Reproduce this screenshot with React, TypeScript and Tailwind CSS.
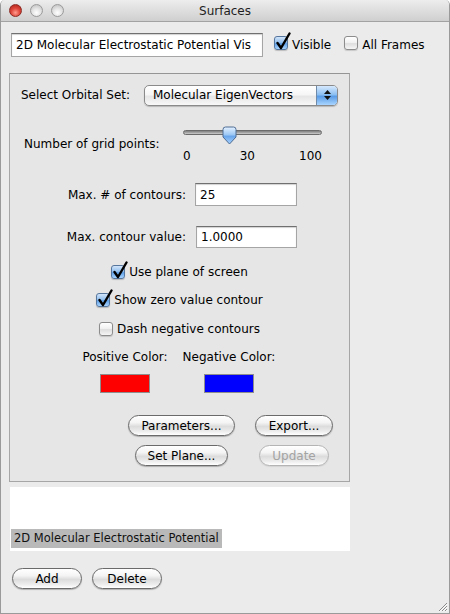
import React from "react";

function Checkbox({ checked }: { checked?: boolean }) {
  return (
    <span className="relative inline-block w-[14px] h-[14px] shrink-0">
      <span
        className={
          checked
            ? "absolute inset-0 rounded-[3px] border border-[#56769e] bg-[linear-gradient(to_bottom,#d2e5fa_0%,#93c0ee_45%,#5f9fe6_55%,#a8d4ff_100%)] shadow-[0_1px_1px_rgba(0,0,0,0.2)]"
            : "absolute inset-0 rounded-[3px] border border-[#8c8c8c] bg-[linear-gradient(to_bottom,#ffffff_0%,#f2f2f2_45%,#dedede_55%,#f6f6f6_100%)] shadow-[0_1px_1px_rgba(0,0,0,0.15)]"
        }
      />
      {checked && (
        <svg className="absolute left-[1px] top-[-4px] w-[16px] h-[18px]" viewBox="0 0 16 18">
          <path d="M2.5 11 L6 16 L14.5 1.5" fill="none" stroke="#000" strokeWidth="2.4" strokeLinecap="round" strokeLinejoin="round" />
        </svg>
      )}
    </span>
  );
}

function AquaButton({ children, className, disabled }: { children: React.ReactNode; className: string; disabled?: boolean }) {
  return (
    <div
      className={
        (disabled
          ? "border-[#b4b4b4] text-[#a3a3a3] shadow-[0_1px_1px_rgba(0,0,0,0.08)] "
          : "border-[#6a6a6a] text-black shadow-[0_1px_1px_rgba(0,0,0,0.25)] ") +
        "h-[21px] rounded-full border bg-[linear-gradient(to_bottom,#ffffff_0%,#f4f4f4_35%,#dcdcdc_55%,#ececec_80%,#ffffff_100%)] text-[12px] leading-none flex items-center justify-center " +
        className
      }
    >
      {children}
    </div>
  );
}

function TextField({ value, className }: { value: string; className: string }) {
  return (
    <div
      className={
        "bg-white border border-[#a5a5a5] border-t-[#707070] shadow-[inset_0_1px_1px_rgba(0,0,0,0.18)] flex items-center overflow-hidden whitespace-nowrap text-[12px] text-black pl-[4px] " +
        className
      }
    >
      {value}
    </div>
  );
}

export default function App() {
  return (
    <div className="w-[450px] h-[614px] bg-white font-['DejaVu_Sans',sans-serif]">
      <div className="relative w-[450px] h-[614px] rounded-t-[5px] border-x border-b border-[#9a9a9a] bg-[#ebebeb] flex flex-col overflow-hidden">
        {/* title bar */}
        <div className="relative h-[22px] shrink-0 border-b border-[#a2a2a2] bg-[linear-gradient(to_bottom,#ededed_0%,#dedede_50%,#cfcfcf_100%)] flex items-center justify-center">
          <div className="absolute left-[8px] top-[4px] flex gap-[8px]">
            <span className="w-[13px] h-[13px] rounded-full border border-[#8c2a23] bg-[radial-gradient(circle_at_50%_70%,#ff9c8f_0%,#e0493d_45%,#a91d13_100%)]" />
            <span className="w-[13px] h-[13px] rounded-full border border-[#9a9a9a] bg-[radial-gradient(circle_at_50%_70%,#ffffff_0%,#e4e4e4_45%,#b9b9b9_100%)]" />
            <span className="w-[13px] h-[13px] rounded-full border border-[#9a9a9a] bg-[radial-gradient(circle_at_50%_70%,#ffffff_0%,#e4e4e4_45%,#b9b9b9_100%)]" />
          </div>
          <span className="text-[12px] text-[#1e1e1e]">Surfaces</span>
        </div>

        {/* top row */}
        <div className="mt-[11px] pl-[10px] h-[24px] flex items-center text-[12px] text-black">
          <TextField value="2D Molecular Electrostatic Potential Vis" className="w-[252px] h-[24px]" />
          <span className="ml-[11px]"><Checkbox checked /></span>
          <span className="ml-[4px]">Visible</span>
          <span className="ml-[13px]"><Checkbox /></span>
          <span className="ml-[4px]">All Frames</span>
        </div>

        {/* group box */}
        <div className="mt-[16px] ml-[8px] w-[341px] h-[409px] shrink-0 border border-[#a6a6a6] border-t-[#959595] bg-black/[0.02] flex flex-col text-[12px] text-black">
          {/* orbital set */}
          <div className="mt-[10px] h-[22px] flex items-center">
            <div className="w-[134px] pl-[11px]">Select Orbital Set:</div>
            <div className="w-[194px] h-[21px] rounded-[5px] border border-[#8a8a8a] bg-[linear-gradient(to_bottom,#ffffff_0%,#f6f6f6_45%,#e6e6e6_55%,#f8f8f8_100%)] shadow-[0_1px_1px_rgba(0,0,0,0.2)] flex overflow-hidden">
              <div className="flex-1 pl-[8px] flex items-center">Molecular EigenVectors</div>
              <div className="w-[21px] border-l border-[#6f89a8] bg-[linear-gradient(to_bottom,#d6e9fd_0%,#8cbff2_45%,#5a9ce6_55%,#a9d5ff_100%)] flex flex-col items-center justify-center gap-[2px]">
                <svg width="7" height="4" viewBox="0 0 7 4"><path d="M3.5 0 L7 4 L0 4 Z" fill="#111" /></svg>
                <svg width="7" height="4" viewBox="0 0 7 4"><path d="M0 0 L7 0 L3.5 4 Z" fill="#111" /></svg>
              </div>
            </div>
          </div>

          {/* grid points slider */}
          <div className="mt-[19px] h-[38px] flex items-center">
            <div className="w-[173px] pl-[14px]">Number of grid points:</div>
            <div className="w-[139px] h-[38px] flex flex-col">
              <div className="relative h-[24px]">
                <div className="absolute left-0 right-0 top-[5px] h-[5px] rounded-full border border-[#6b6b6b] bg-[linear-gradient(to_bottom,#808080_0%,#a9a9a9_60%,#cfcfcf_100%)]" />
                <svg className="absolute left-[39px] top-[1px]" width="15" height="19" viewBox="0 0 15 19">
                  <defs>
                    <linearGradient id="thumb" x1="0" y1="0" x2="0" y2="1">
                      <stop offset="0" stopColor="#e4f1ff" />
                      <stop offset="0.45" stopColor="#9cc8f4" />
                      <stop offset="0.55" stopColor="#6aa6ea" />
                      <stop offset="1" stopColor="#a8d3ff" />
                    </linearGradient>
                  </defs>
                  <path d="M1 3.5 Q1 1 3.5 1 H11.5 Q14 1 14 3.5 V11 L7.5 18 L1 11 Z" fill="url(#thumb)" stroke="#4e6c93" strokeWidth="1" />
                </svg>
              </div>
              <div className="h-[14px] flex items-center leading-none">
                <span>0</span>
                <span className="ml-[49px]">30</span>
                <span className="ml-auto">100</span>
              </div>
            </div>
          </div>

          {/* max contours */}
          <div className="mt-[20px] h-[23px] flex items-center">
            <div className="w-[176px] text-right">Max. # of contours:</div>
            <TextField value="25" className="ml-[9px] w-[102px] h-[23px]" />
          </div>
          <div className="mt-[20px] h-[22px] flex items-center">
            <div className="w-[176px] text-right">Max. contour value:</div>
            <TextField value="1.0000" className="ml-[10px] w-[101px] h-[22px]" />
          </div>

          {/* checkboxes */}
          <div className="mt-[16px] h-[16px] flex items-center justify-center gap-[4px]">
            <Checkbox checked />
            <span>Use plane of screen</span>
          </div>
          <div className="mt-[12px] h-[16px] flex items-center justify-center gap-[4px]">
            <Checkbox checked />
            <span>Show zero value contour</span>
          </div>
          <div className="mt-[13px] h-[16px] flex items-center justify-center gap-[4px]">
            <Checkbox />
            <span>Dash negative contours</span>
          </div>

          {/* colors */}
          <div className="mt-[12px] h-[16px] pl-[63px] flex items-center">
            <div className="w-[104px] text-center">Positive Color:</div>
            <div className="w-[104px] text-center">Negative Color:</div>
          </div>
          <div className="mt-[9px] h-[19px] pl-[63px] flex">
            <div className="w-[104px] flex justify-center">
              <div className="w-[50px] h-[19px] border border-[#8e8e8e] bg-[#ff0000]" />
            </div>
            <div className="w-[104px] flex justify-center">
              <div className="w-[50px] h-[19px] border border-[#8e8e8e] bg-[#0000ff]" />
            </div>
          </div>

          {/* buttons */}
          <div className="mt-[22px] h-[21px] pl-[118px] flex gap-[20px]">
            <div className="w-[107px] flex justify-center">
              <AquaButton className="w-[107px]">Parameters...</AquaButton>
            </div>
            <div className="w-[78px] flex justify-center">
              <AquaButton className="w-[78px]">Export...</AquaButton>
            </div>
          </div>
          <div className="mt-[9px] h-[21px] pl-[118px] flex gap-[20px]">
            <div className="w-[107px] flex justify-center">
              <AquaButton className="w-[93px]">Set Plane...</AquaButton>
            </div>
            <div className="w-[78px] flex justify-center">
              <AquaButton className="w-[70px]" disabled>Update</AquaButton>
            </div>
          </div>
        </div>

        {/* list */}
        <div className="mt-[5px] ml-[9px] w-[340px] h-[64px] shrink-0 bg-white flex flex-col justify-end pb-[3px]">
          <div className="ml-[1px] w-[211px] h-[19px] bg-[#b9b9b9] pl-[3px] flex items-center text-[11.5px] text-[#111] whitespace-nowrap">
            2D Molecular Electrostatic Potential
          </div>
        </div>

        {/* add/delete */}
        <div className="mt-[17px] ml-[11px] flex gap-[10px]">
          <AquaButton className="w-[70px]">Add</AquaButton>
          <AquaButton className="w-[70px]">Delete</AquaButton>
        </div>

        {/* resize grip */}
        <svg className="absolute right-[1px] bottom-[1px]" width="11" height="11" viewBox="0 0 11 11">
          <path d="M10 2 L2 10 M10 5 L5 10 M10 8 L8 10" stroke="#8a8a8a" strokeWidth="1" />
          <path d="M10.5 3 L3 10.5 M10.5 6 L6 10.5 M10.5 9 L9 10.5" stroke="#ffffff" strokeWidth="1" />
        </svg>
      </div>
    </div>
  );
}
